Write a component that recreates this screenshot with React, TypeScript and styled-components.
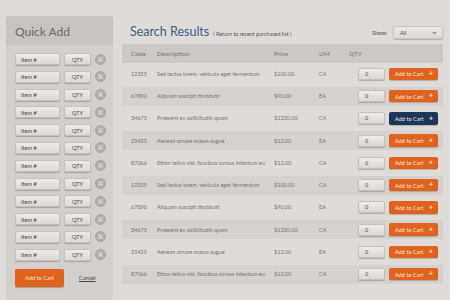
import React from "react";
import styled, { createGlobalStyle } from "styled-components";

const GlobalStyle = createGlobalStyle`
  html, body { margin: 0; padding: 0; background: #dfdbd8; }
  body { font-family: "Lato", "Open Sans", sans-serif; }
  * { box-sizing: border-box; }
`;

const Page = styled.div`
  width: 450px;
  height: 300px;
  overflow: hidden;
  display: flex;
  align-items: flex-start;
  background: #dfdbd8;
`;

const Sidebar = styled.aside`
  margin: 16px 0 0 6px;
  width: 107px;
  height: 300px;
  flex: none;
  background: #d3cfcc;
  border-radius: 2px 2px 0 0;
  display: flex;
  flex-direction: column;
`;

const SidebarHeader = styled.div`
  height: 29px;
  padding: 1px 0 0 9px;
  display: flex;
  align-items: center;
  background: #c8c4c1;
  border-radius: 2px 2px 0 0;
  color: #6e6666;
  font-size: 12px;
  font-weight: 400;
`;

const QuickRows = styled.div`
  display: flex;
  flex-direction: column;
  gap: 5.8px;
  padding: 8px 0 0 9px;
`;

const QuickRow = styled.div`
  display: flex;
  align-items: center;
  height: 12px;
`;

const Field = styled.div<{ $w: number; $center?: boolean }>`
  width: ${(p) => p.$w}px;
  height: 12px;
  border-radius: 2px;
  background: linear-gradient(#ece9e6, #dcd8d5);
  border: 1px solid #c5c1be;
  box-shadow: 0 1px 1px rgba(0, 0, 0, 0.22);
  display: flex;
  align-items: center;
  justify-content: ${(p) => (p.$center ? "center" : "flex-start")};
  padding-left: ${(p) => (p.$center ? 0 : 5)}px;
  font-size: 5.6px;
  color: #4d4747;
`;

const RemoveButton = styled.button`
  margin-left: 4px;
  width: 11px;
  height: 11px;
  padding: 0;
  border: none;
  background: none;
  display: flex;
`;

const QuickFooter = styled.div`
  display: flex;
  align-items: center;
  padding: 8px 0 0 9px;
`;

const PrimaryButton = styled.button`
  width: 49px;
  height: 18px;
  border: none;
  border-radius: 2px;
  background: #df631d;
  box-shadow: 0 1px 1px rgba(0, 0, 0, 0.25);
  color: #fbe6d8;
  font-family: inherit;
  font-size: 5.7px;
  padding: 0;
`;

const CancelLink = styled.a`
  margin-left: 15px;
  font-size: 5.6px;
  color: #4d4747;
  text-decoration: underline;
`;

const Main = styled.main`
  margin-left: 9px;
  width: 321px;
  flex: none;
  display: flex;
  flex-direction: column;
`;

const TitleBar = styled.div`
  height: 44px;
  padding-top: 21px;
  display: flex;
  align-items: center;
  align-self: stretch;
`;

const Title = styled.h1`
  margin: 0 0 0 8px;
  font-size: 12.5px;
  font-weight: 400;
  color: #3e5f85;
  line-height: 1;
`;

const SubLink = styled.span`
  margin-left: 4px;
  font-size: 5.4px;
  color: #5a5454;
  padding-top: 2px;
`;

const ShowLabel = styled.span`
  margin-left: auto;
  margin-right: 6px;
  font-size: 5.6px;
  color: #4d4747;
`;

const Select = styled.div`
  width: 50px;
  height: 13px;
  border-radius: 2px;
  background: linear-gradient(#ece9e6, #dcd8d5);
  border: 1px solid #cac6c3;
  box-shadow: 0 1px 1px rgba(0, 0, 0, 0.22);
  display: flex;
  align-items: center;
  justify-content: space-between;
  padding: 0 5px 0 6px;
  font-size: 5.6px;
  color: #4d4747;
`;

const Grid = styled.div`
  display: grid;
  grid-template-columns: 26px 117px 45px 30px 1fr;
  align-items: center;
  padding-left: 9px;
  white-space: nowrap;
`;

const HeaderRow = styled(Grid)`
  height: 19px;
  background: #ccc8c5;
  font-size: 6.4px;
  color: #7d7775;
`;

const Body = styled.div`
  display: flex;
  flex-direction: column;
  gap: 3.5px;
  padding-top: 1.6px;
`;

const DataRow = styled(Grid)<{ $striped: boolean }>`
  height: 18.75px;
  background: ${(p) => (p.$striped ? "#d5d1ce" : "transparent")};
  font-size: 5.5px;
  color: #7a7371;
`;

const QtyCell = styled.div`
  display: flex;
  align-items: center;
  padding-left: 9px;
`;

const QtyInput = styled.div`
  width: 27px;
  height: 12px;
  border-radius: 2px;
  background: linear-gradient(#efece9, #dad6d3);
  border: 1px solid #c5c1be;
  box-shadow: 0 1px 1px rgba(0, 0, 0, 0.22);
  display: flex;
  align-items: center;
  padding-left: 6px;
  font-size: 5.5px;
  color: #4d4747;
`;

const CartButton = styled.button<{ $dark?: boolean }>`
  margin-left: 4px;
  width: 49px;
  height: 12.5px;
  border: none;
  border-radius: 2px;
  background: ${(p) => (p.$dark ? "#1c355a" : "#df631d")};
  box-shadow: 0 1px 1px rgba(0, 0, 0, 0.2);
  color: #fbe9dd;
  font-family: inherit;
  font-size: 5.6px;
  display: flex;
  align-items: center;
  justify-content: space-between;
  padding: 0 5px 0 6px;
`;

const Plus = styled.span`
  font-size: 7.5px;
  font-weight: 700;
  line-height: 1;
`;

const RemoveIcon = () => (
  <svg width="11" height="11" viewBox="0 0 11 11">
    <circle cx="5.5" cy="5.5" r="5" fill="#b3afac" stroke="#a29e9b" strokeWidth="0.8" />
    <path d="M3.6 3.6 L7.4 7.4 M7.4 3.6 L3.6 7.4" stroke="#dcd8d5" strokeWidth="1.1" strokeLinecap="round" />
  </svg>
);

const Chevron = () => (
  <svg width="5" height="4" viewBox="0 0 5 4">
    <path d="M0.8 1 L2.5 2.8 L4.2 1" stroke="#4d4747" strokeWidth="0.9" fill="none" />
  </svg>
);

const items = [
  ["12355", "Sed lectus lorem, vehicula eget fermentum", "$100.00", "CA"],
  ["67890", "Aliquam suscipit tincidunt", "$90.00", "EA"],
  ["34675", "Praesent eu sollicitudin quam", "$1230.00", "CA"],
  ["25425", "Aenean ornare massa augue", "$12.00", "EA"],
  ["87066", "Etiam tellus nisl, faucibus cursus interdum eu", "$12.00", "CA"],
];

const rows = [...items, ...items];

export default function App() {
  return (
    <Page>
      <GlobalStyle />
      <Sidebar>
        <SidebarHeader>Quick Add</SidebarHeader>
        <QuickRows>
          {Array.from({ length: 12 }).map((_, i) => (
            <QuickRow key={i}>
              <Field $w={45}>Item #</Field>
              <Field $w={27} $center style={{ marginLeft: 4 }}>
                QTY
              </Field>
              <RemoveButton aria-label="Remove">
                <RemoveIcon />
              </RemoveButton>
            </QuickRow>
          ))}
        </QuickRows>
        <QuickFooter>
          <PrimaryButton>Add to Cart</PrimaryButton>
          <CancelLink>Cancel</CancelLink>
        </QuickFooter>
      </Sidebar>
      <Main>
        <TitleBar>
          <Title>Search Results</Title>
          <SubLink>( Return to recent purchased list )</SubLink>
          <ShowLabel>Show:</ShowLabel>
          <Select>
            <span>All</span>
            <Chevron />
          </Select>
        </TitleBar>
        <HeaderRow>
          <span>Code</span>
          <span>Description</span>
          <span>Price</span>
          <span>UM</span>
          <span>QTY</span>
        </HeaderRow>
        <Body>
          {rows.map((r, i) => (
            <DataRow key={i} $striped={i % 2 === 1}>
              <span>{r[0]}</span>
              <span>{r[1]}</span>
              <span>{r[2]}</span>
              <span>{r[3]}</span>
              <QtyCell>
                <QtyInput>0</QtyInput>
                <CartButton $dark={i === 2}>
                  <span>Add to Cart</span>
                  <Plus>+</Plus>
                </CartButton>
              </QtyCell>
            </DataRow>
          ))}
        </Body>
      </Main>
    </Page>
  );
}
